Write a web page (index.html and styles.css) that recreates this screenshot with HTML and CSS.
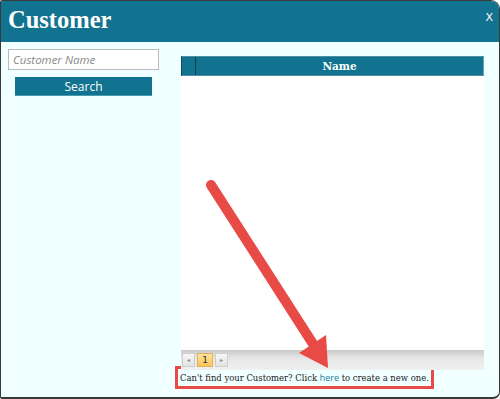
FILE: index.html
```html
<!DOCTYPE html>
<html lang="en">
<head>
    <meta charset="UTF-8">
    <title>Customer</title>
    <link rel="stylesheet" href="styles.css">
</head>
<body>
    <div class="window">
        <div class="header">
            <h1 class="title">Customer</h1>
            <span class="close">X</span>
        </div>
        <div class="content">
            <div class="search-panel">
                <input class="search-input" type="text" placeholder="Customer Name">
                <button class="search-button">Search</button>
            </div>
            <div class="results">
                <div class="grid">
                    <div class="grid-head">
                        <div class="grid-select"></div>
                        <div class="grid-col">Name</div>
                    </div>
                    <div class="grid-body"></div>
                    <div class="pager">
                        <span class="pager-btn">&#9666;</span>
                        <span class="pager-page">1</span>
                        <span class="pager-btn">&#9656;</span>
                    </div>
                </div>
                <p class="hint">Can't find your Customer? Click <a class="hint-link" href="#">here</a> to create a new one.</p>
            </div>
        </div>

        <!-- annotation arrow -->
        <svg class="arrow" width="500" height="399" viewBox="0 0 500 399">
            <line x1="211" y1="185" x2="315" y2="347" stroke="#e84a45" stroke-width="10" stroke-linecap="round"/>
            <polygon points="299,353 326,335 328,368" fill="#e84a45"/>
        </svg>
    </div>
</body>
</html>
```

FILE: styles.css
```css
body {
    margin: 0;
    padding: 0;
    font-family: "DejaVu Serif", serif;
}

.window {
    position: relative;
    width: 500px;
    height: 399px;
    box-sizing: border-box;
    border: 1px solid #3a3a3a;
    border-bottom-width: 2px;
    border-radius: 2px 9px 7px 2px;
    background-color: #f0ffff;
    overflow: hidden;
}

.header {
    height: 41px;
    background-color: #127390;
    display: flex;
    align-items: flex-start;
    justify-content: space-between;
}

.title {
    margin: 5px 0 0 7px;
    font-family: "Liberation Serif", serif;
    font-size: 24.5px;
    font-weight: bold;
    color: #fff;
}

.close {
    margin: 10px 6px 0 0;
    font-family: "DejaVu Sans", sans-serif;
    font-size: 11px;
    color: #fff;
}

.content {
    display: flex;
}

.search-panel {
    width: 180px;
    padding: 7px 0 0 7px;
    box-sizing: border-box;
    display: flex;
    flex-direction: column;
    align-items: flex-start;
}

.search-input {
    width: 151px;
    height: 21px;
    box-sizing: border-box;
    margin: 0;
    padding: 0 4px;
    border: 1px solid #bbb;
    font-family: "Open Sans", sans-serif;
    font-style: italic;
    font-size: 11.5px;
}

.search-input::placeholder {
    color: #888;
}

.search-button {
    margin: 7px 0 0 7px;
    width: 137px;
    height: 19px;
    padding: 0;
    border: none;
    border-bottom: 1px solid #4a9ab0;
    background-color: #127390;
    color: #fff;
    font-family: "Open Sans", sans-serif;
    font-size: 12px;
}

.results {
    width: 303px;
    padding-top: 14px;
}

.grid {
    height: 314px;
    background-color: #fff;
    display: flex;
    flex-direction: column;
}

.grid-head {
    height: 18px;
    display: flex;
    background-color: #127390;
    border: 1px solid #4f8fa3;
    border-left: 1px solid #0b4a5c;
    border-right: 1px solid #6aa0b0;
    color: #fff;
    font-size: 10.5px;
    font-weight: bold;
}

.grid-select {
    width: 13px;
    border-right: 1px solid #163c47;
}

.grid-col {
    flex: 1;
    text-align: center;
    line-height: 18px;
}

.grid-body {
    flex: 1;
}

.pager {
    height: 20px;
    display: flex;
    align-items: center;
    gap: 2px;
    padding-left: 1px;
    background: linear-gradient(#c9c9c9, #e6e6e6 40%, #f0f0f0);
}

.pager-btn {
    width: 11px;
    height: 12px;
    border: 1px solid #cfcfcf;
    background: linear-gradient(#f7f7f7, #e2e2e2);
    color: #888;
    font-size: 6px;
    line-height: 12px;
    text-align: center;
}

.pager-page {
    width: 14px;
    height: 12px;
    border: 1px solid #e0b45a;
    background: linear-gradient(#ffe59a, #f7c35a);
    font-family: "DejaVu Sans", sans-serif;
    font-size: 9px;
    line-height: 12px;
    text-align: center;
    color: #333;
}

.hint {
    margin: -4px 0 0 -6px;
    width: fit-content;
    padding: 3px 2px 3px 2px;
    border: 3px solid #e84a45;
    font-size: 9.4px;
    font-stretch: condensed;
    line-height: 11px;
    color: #222;
    white-space: nowrap;
}

.hint-link {
    font-family: "Open Sans", sans-serif;
    font-stretch: normal;
    font-size: 9px;
    color: #1a7a9c;
    text-decoration: none;
}

.arrow {
    position: absolute;
    left: -1px;
    top: -1px;
    pointer-events: none;
}
```
